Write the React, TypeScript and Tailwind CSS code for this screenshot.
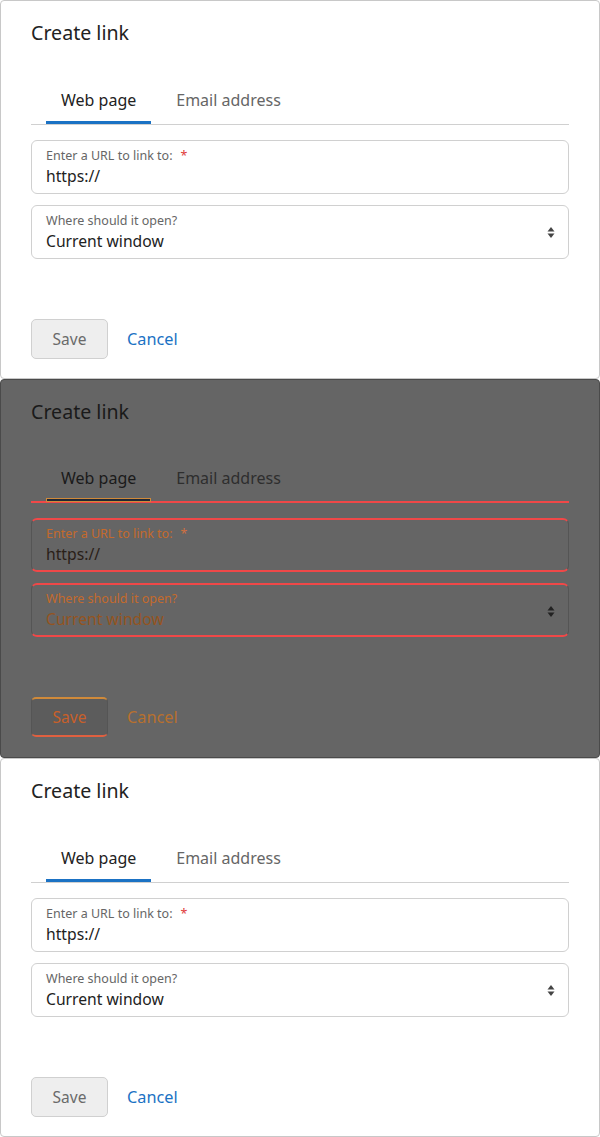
import { ReactNode } from "react";

type Variant = "normal" | "overlay";

function Field({ label, value, required, select, v }: { label: string; value: string; required?: boolean; select?: boolean; v: Variant }) {
  const dark = v === "overlay";
  return (
    <div
      className={
        dark
          ? "relative h-[54px] rounded-[6px] border border-[#555] border-t-2 border-b-2 border-t-[#f04848] border-b-[#f04848] px-[14px] pt-[6px]"
          : "relative h-[54px] rounded-[6px] border border-[#d0d0d0] px-[14px] pt-[7px]"
      }
    >
      <div className={dark ? "text-[12.5px] leading-[16px] text-[#c46a2c]" : "text-[12.5px] leading-[16px] text-[#666]"}>
        {label}
        {required && <span className={dark ? "ml-[8px] text-[#d07040]" : "ml-[8px] text-[#e03a3a]"}>*</span>}
      </div>
      <div className={dark ? (select ? "mt-[1px] text-[15.7px] leading-[22px] text-[#94541f]" : "mt-[1px] text-[15.7px] leading-[22px] text-[#2a2018]") : "mt-[1px] text-[15.7px] leading-[22px] text-[#222]"}>
        {value}
      </div>
      {select && (
        <svg className="absolute right-[13px] top-[20px]" width="8" height="13" viewBox="0 0 8 13">
          <path d="M4 1 L7.5 5.5 L0.5 5.5 Z" fill={dark ? "#222" : "#444"} />
          <path d="M4 12 L7.5 7.5 L0.5 7.5 Z" fill={dark ? "#222" : "#444"} />
        </svg>
      )}
    </div>
  );
}

function Tab({ children, active, v }: { children: ReactNode; active?: boolean; v: Variant }) {
  const dark = v === "overlay";
  const text = active ? (dark ? "text-[#1a1a1a]" : "text-[#222]") : dark ? "text-[#2e2e2e]" : "text-[#666]";
  return (
    <div className={"relative mr-[10px] flex items-center px-[15px] pb-[2px] text-[16px] " + text}>
      {children}
      {active && (
        <div
          className={
            dark
              ? "absolute bottom-[-1px] left-0 right-0 h-[4px] border border-[#d08a3a] bg-[#1e2836]"
              : "absolute bottom-[0px] left-0 right-0 h-[3px] bg-[#1b72c4]"
          }
        />
      )}
    </div>
  );
}

function Panel({ v }: { v: Variant }) {
  const dark = v === "overlay";
  return (
    <div
      className={
        dark
          ? "h-[379px] rounded-[4px] border border-[#4a4a4a] bg-[#656565] px-[30px] pt-[19px]"
          : "h-[379px] rounded-[4px] border border-[#c8c8c8] bg-white px-[30px] pt-[19px]"
      }
    >
      <h1 className={dark ? "h-[26px] text-[19.6px] leading-[26px] text-[#1a1a1a]" : "h-[26px] text-[19.6px] leading-[26px] text-[#222]"}>Create link</h1>

      <div className={dark ? "mt-[32px] flex h-[46px] border-b-2 border-[#f04848] pl-[15px]" : "mt-[32px] flex h-[47px] border-b border-[#d0d0d0] pl-[15px]"}>
        <Tab active v={v}>Web page</Tab>
        <Tab v={v}>Email address</Tab>
      </div>

      <div className="mt-[15px] flex flex-col gap-[11px]">
        <Field v={v} label="Enter a URL to link to:" value="https://" required />
        <Field v={v} label="Where should it open?" value="Current window" select />
      </div>

      <div className="mt-[60px] flex items-center gap-[19px]">
        <button
          className={
            dark
              ? "h-[40px] w-[77px] rounded-[5px] border border-[#555] border-t-2 border-b-2 border-t-[#d08a3a] border-b-[#e06040] bg-[#5c5c5c] pt-[1px] text-[15.5px] text-[#c8602a]"
              : "h-[40px] w-[77px] rounded-[5px] border border-[#d0d0d0] bg-[#eeeeee] pt-[1px] text-[15.5px] text-[#6a6a6a]"
          }
        >
          Save
        </button>
        <span className={dark ? "text-[16.3px] text-[#b8702e]" : "text-[16.3px] text-[#1b72c4]"}>Cancel</span>
      </div>
    </div>
  );
}

export default function App() {
  return (
    <div className="w-[600px] bg-white" style={{ fontFamily: '"Noto Sans", "Open Sans", sans-serif' }}>
      <Panel v="normal" />
      <Panel v="overlay" />
      <Panel v="normal" />
    </div>
  );
}
